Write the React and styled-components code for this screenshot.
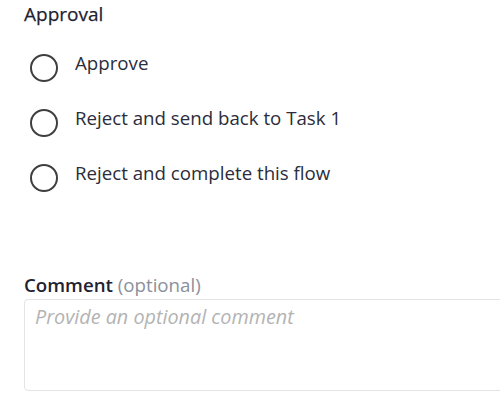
import styled, { createGlobalStyle } from 'styled-components';

const Global = createGlobalStyle`
  html, body { margin: 0; padding: 0; background: #fff; overflow: hidden; }
  body { font-family: "Open Sans", "Noto Sans", sans-serif; }
`;

const options = [
  'Approve',
  'Reject and send back to Task 1',
  'Reject and complete this flow',
];

export default function App() {
  return (
    <>
      <Global />
      <Page>
        <Section>
          <Heading>Approval</Heading>
          <Options>
            {options.map((label) => (
              <Option key={label}>
                <Radio type="radio" name="approval" />
                <OptionText>{label}</OptionText>
              </Option>
            ))}
          </Options>
        </Section>

        <Field>
          <Label>
            Comment <Optional>(optional)</Optional>
          </Label>
          <Comment placeholder="Provide an optional comment" />
        </Field>
      </Page>
    </>
  );
}

const Page = styled.div`
  width: 500px;
  height: 401px;
  padding: 2px 0 0 24px;
  box-sizing: border-box;
  overflow: hidden;
  color: #242634;
`;

const Section = styled.section`
  display: flex;
  flex-direction: column;
`;

const Heading = styled.h3`
  margin: 0;
  font-size: 19px;
  line-height: 24px;
  font-weight: 500;
  color: #1f2230;
  -webkit-text-stroke: 0.25px #1f2230;
`;

const Options = styled.div`
  display: flex;
  flex-direction: column;
  gap: 22px;
  padding: 23px 0 0 6px;
`;

const Option = styled.label`
  display: flex;
  align-items: flex-start;
  gap: 17px;
  cursor: pointer;
`;

const OptionText = styled.span`
  font-size: 18.7px;
  line-height: 28px;
  color: #2b2d3a;
`;

const Radio = styled.input`
  appearance: none;
  margin: 5px 0 0;
  width: 28px;
  height: 28px;
  box-sizing: border-box;
  border: 2.5px solid #3f3f3f;
  border-radius: 50%;
  background: #fff;
  flex: none;
  &:checked { box-shadow: inset 0 0 0 5px #fff; background: #3f3f3f; }
`;

const Field = styled.div`
  display: flex;
  flex-direction: column;
  margin-top: 81px;
`;

const Label = styled.label`
  font-size: 18.7px;
  line-height: 24px;
  font-weight: 600;
  color: #1f2230;
`;

const Optional = styled.span`
  font-weight: 400;
  color: #8c909a;
`;

const Comment = styled.textarea`
  margin-top: 2px;
  width: 490px;
  height: 92px;
  box-sizing: border-box;
  padding: 5px 10px;
  border: 1px solid #e4e4e4;
  border-radius: 4px;
  resize: none;
  font-family: inherit;
  font-size: 19.8px;
  line-height: 24px;
  color: #2b2d3a;
  &::placeholder { font-style: italic; color: #b3b3b3; }
  &:focus { outline: none; border-color: #c8c8c8; }
`;
